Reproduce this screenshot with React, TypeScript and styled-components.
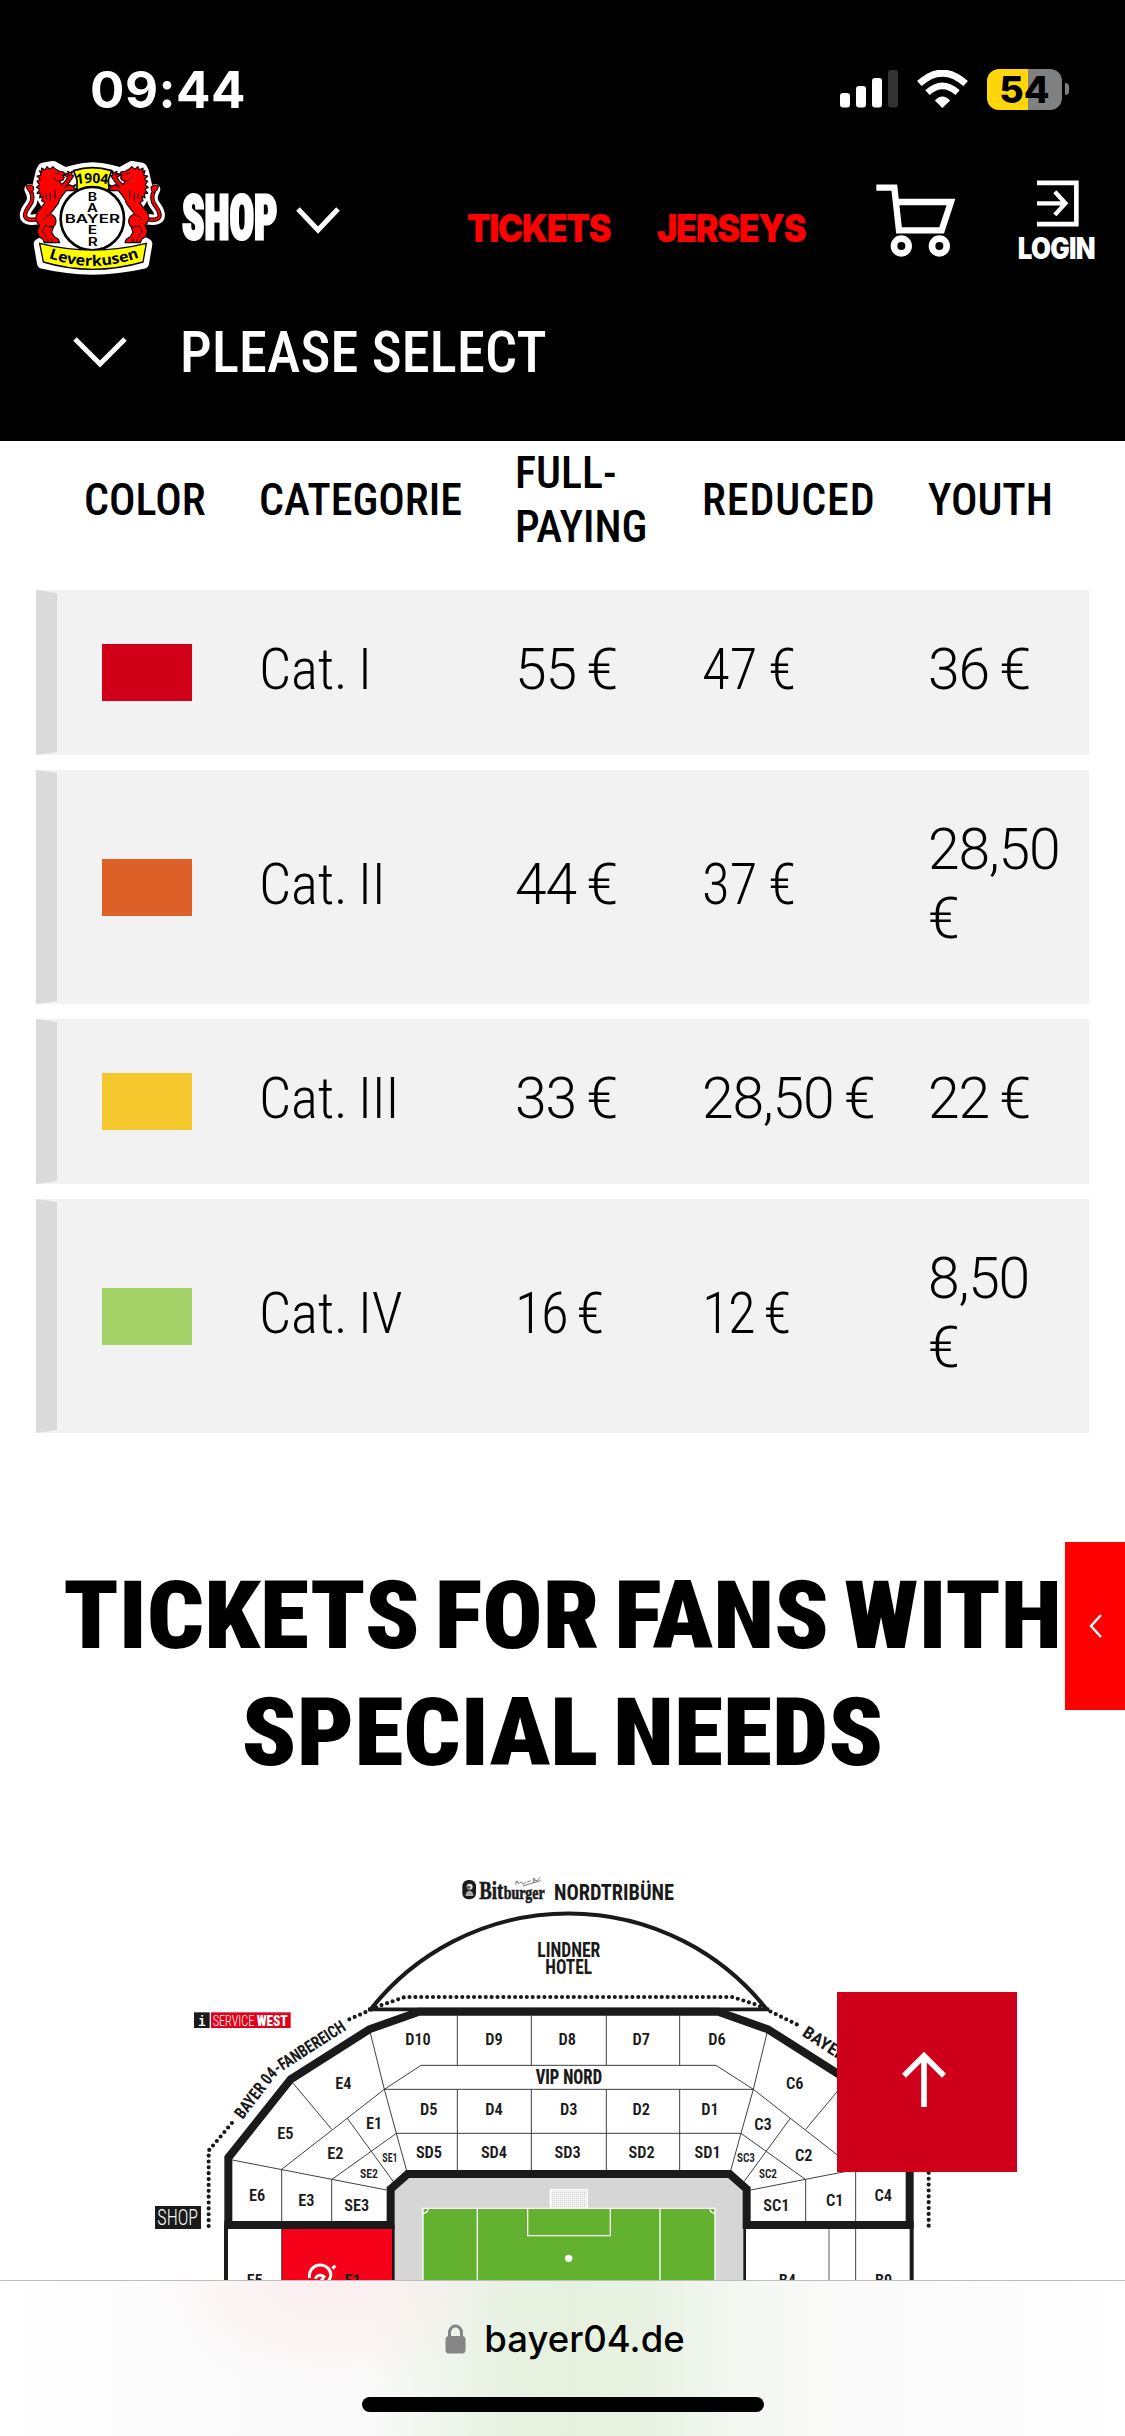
import styled, { createGlobalStyle } from 'styled-components';

const GlobalStyle = createGlobalStyle`
	* {
		box-sizing: border-box;
	}
	body {
		margin: 0;
		background: #fff;
		font-family: Roboto, sans-serif;
		color: #000;
	}
`;

const Screen = styled.div`
	position: relative;
	display: flex;
	flex-direction: column;
	width: 1125px;
	height: 2436px;
	overflow: hidden;
	background: #fff;
`;

/* ---------- top ---------- */

const TopArea = styled.header`
	height: 441px;
	flex: none;
	background: #000;
	color: #fff;
`;

const StatusBar = styled.div`
	display: flex;
	align-items: center;
	height: 154px;
	padding: 24px 56px 0 90px;
	font-family: Inter, sans-serif;
`;

const Clock = styled.span`
	flex: 1;
	font-size: 51px;
	font-weight: 700;
	letter-spacing: 0.5px;
`;

const SignalIcon = styled.svg`
	width: 58px;
	height: 38px;
	margin-right: 19px;
`;

const WifiIcon = styled.svg`
	width: 51px;
	height: 38px;
	margin-right: 19px;
`;

const Battery = styled.div`
	display: flex;
	align-items: center;
	justify-content: center;
	width: 75px;
	height: 41px;
	border-radius: 12px;
	background: linear-gradient(90deg, #ffd60a 0 41px, #808080 41px);
	color: #000;
	font-size: 37.5px;
	font-weight: 850;
	line-height: 41px;
`;

const BatteryNub = styled.div`
	width: 4px;
	height: 12px;
	margin-left: 3px;
	border-radius: 0 4px 4px 0;
	background: #808080;
`;

const Nav = styled.nav`
	display: flex;
	align-items: flex-start;
	height: 135px;
	padding: 7px 0 0 18px;
`;

const Crest = styled.svg`
	flex: none;
	width: 149px;
	height: 114px;
`;

const ShopLabel = styled.span`
	flex: none;
	width: 115px;
	margin: 22px 0 0 15px;
	font-size: 61px;
	font-weight: 900;
	font-stretch: 75%;
	line-height: 70px;
	-webkit-text-stroke: 3px #fff;
	transform: scaleX(0.67);
	transform-origin: left;
`;

const ShopChevron = styled.svg`
	flex: none;
	width: 44px;
	height: 28px;
	margin: 46px 127px 0 -1px;
`;

const NavLink = styled.span<{ $width: number }>`
	flex: none;
	width: ${(p) => p.$width}px;
	margin-top: 47px;
	color: #f00;
	font-family: Inter, sans-serif;
	font-size: 38.5px;
	font-weight: 900;
	letter-spacing: -1.5px;
	line-height: 40px;
	transform: scaleX(0.89);
	transform-origin: left;
`;

const CartIcon = styled.svg`
	flex: none;
	width: 80px;
	height: 73px;
	margin-top: 23px;
`;

const Login = styled.div`
	flex: none;
	display: flex;
	flex-direction: column;
	align-items: center;
	width: 80px;
	margin: 19px 0 0 60px;
	svg {
		width: 42px;
		height: 47px;
		margin-left: 4px;
	}
	span {
		margin-top: 6px;
		font-family: Inter, sans-serif;
		font-size: 29.6px;
		font-weight: 900;
		letter-spacing: -0.8px;
		line-height: 30px;
		transform: scaleX(0.87);
	}
`;

const Select = styled.div`
	display: flex;
	align-items: center;
	height: 126px;
	padding: 1px 0 0 72px;
	font-size: 56.5px;
	font-weight: 500;
	font-stretch: 75%;
	letter-spacing: 0.15px;
`;

const SelectChevron = styled.svg`
	width: 56px;
	height: 34px;
	margin-right: 52px;
`;

/* ---------- price table ---------- */

const columns = '223px 256px 187px 226px 1fr';

const PriceTable = styled.section`
	display: flex;
	flex-direction: column;
	gap: 15px;
	padding: 0 36px;
`;

const HeadRow = styled.div`
	display: grid;
	grid-template-columns: ${columns};
	align-items: center;
	height: 134px;
	padding-bottom: 17px;
	font-size: 44px;
	font-weight: 550;
	font-stretch: 75%;
	line-height: 54px;
	span:first-child {
		padding-left: 48px;
	}
	span:nth-child(4) {
		letter-spacing: 0.9px;
	}
`;

const PriceRow = styled.div`
	display: grid;
	grid-template-columns: ${columns};
	align-items: center;
	padding: 48px 0;
	background: #f2f2f2;
	position: relative;
	&::before {
		content: '';
		position: absolute;
		left: 0;
		top: 0;
		bottom: 0;
		width: 21px;
		background: #dadada;
		clip-path: polygon(0 0, 100% 3px, 100% calc(100% - 3px), 0 100%);
	}
`;

const Swatch = styled.div<{ $color: string }>`
	width: 90px;
	height: 57px;
	margin-left: 66px;
	background: ${(p) => p.$color};
`;

const Cell = styled.span<{ $condensed?: boolean; $spacing?: number }>`
	margin: -3px 0 3px;
	font-size: 57px;
	font-weight: 300;
	font-stretch: ${(p) => (p.$condensed ? '75%' : '100%')};
	letter-spacing: ${(p) => p.$spacing ?? 0}px;
	line-height: 69px;
	word-spacing: -2px;
	&:last-child {
		padding-right: 26px;
	}
`;

/* ---------- special needs ---------- */

const Heading = styled.h2`
	margin: 124px 0 0;
	font-size: 95px;
	font-weight: 900;
	font-stretch: 75%;
	line-height: 117px;
	text-align: center;
	white-space: nowrap;
	word-spacing: -8px;
	transform: scaleX(1.055);
`;

const StadiumMap = styled.svg`
	display: block;
	flex: none;
	width: 1125px;
	height: 420px;
	margin-top: 69px;
	font-family: Roboto, sans-serif;
	font-stretch: 75%;
	fill: #1a1a1a;
`;

const SideTab = styled.button`
	position: absolute;
	top: 1542px;
	right: 0;
	display: grid;
	place-items: center;
	width: 60px;
	height: 168px;
	padding: 0 1px 0 0;
	border: 0;
	background: #f00;
`;

const BackToTop = styled.button`
	position: absolute;
	top: 1992px;
	left: 837px;
	display: grid;
	place-items: center;
	width: 180px;
	height: 180px;
	padding: 0 6px 6px 0;
	border: 0;
	background: #cf0019;
`;

/* ---------- browser bar ---------- */

const BrowserBar = styled.footer`
	flex: none;
	display: flex;
	flex-direction: column;
	align-items: center;
	height: 156px;
	border-top: 1px solid #bdbdbd;
	background:
		radial-gradient(ellipse 190px 110px at 330px 0, rgba(255, 225, 228, 0.45), rgba(255, 255, 255, 0)),
		linear-gradient(90deg, rgba(229, 241, 222, 0) 370px, #e8f2e2 500px, #e5f1de 570px, #e8f2e2 650px, rgba(240, 245, 236, 0.5) 740px, rgba(251, 251, 251, 0) 850px),
		linear-gradient(90deg, #fff, #fafafa 240px, #fafafa 900px, #fff);
`;

const Address = styled.div`
	display: flex;
	align-items: center;
	gap: 18px;
	margin: 34px 0 0 5px;
	font-family: Inter, sans-serif;
	font-size: 36.5px;
	font-weight: 500;
	line-height: 48px;
`;

const HomeIndicator = styled.div`
	width: 402px;
	height: 15px;
	margin-top: 34px;
	border-radius: 8px;
	background: #000;
`;

const prices = [
	{ color: '#d00019', name: 'Cat. I', full: '55 €', reduced: '47 €', youth: '36 €' },
	{ color: '#de6029', name: 'Cat. II', full: '44 €', reduced: '37 €', youth: '28,50 €' },
	{ color: '#f4c82c', name: 'Cat. III', full: '33 €', reduced: '28,50 €', youth: '22 €' },
	{ color: '#a5d268', name: 'Cat. IV', full: '16 €', reduced: '12 €', youth: '8,50 €' },
];

// [label, center x, center y]
const blocks: [string, number, number][] = [
	['D10', 834, 536], ['D9', 1062, 536], ['D8', 1282, 536], ['D7', 1504, 536], ['D6', 1731, 536],
	['D5', 866, 748], ['D4', 1062, 748], ['D3', 1286, 748], ['D2', 1504, 748], ['D1', 1710, 748],
	['SD5', 867, 877], ['SD4', 1062, 877], ['SD3', 1283, 877], ['SD2', 1505, 877], ['SD1', 1703, 877],
	['E4', 610, 668], ['E5', 436, 820], ['E1', 702, 790], ['E2', 586, 880],
	['E6', 351, 1005], ['E3', 499, 1019], ['SE3', 650, 1034],
	['C6', 1964, 668], ['C3', 1869, 792], ['C2', 1991, 884],
	['SC1', 1909, 1036], ['C1', 2084, 1019], ['C4', 2230, 1005],
	['F5', 344, 1260], ['F1', 638, 1260], ['B4', 1942, 1260], ['B9', 2231, 1260],
];

const smallBlocks: [string, number, number][] = [
	['SE1', 750, 893], ['SE2', 687, 940], ['SC3', 1818, 892], ['SC2', 1884, 940],
];

const lionBody =
	'M120 92 L126 96 L126 84 L136 90 L142 80 L150 88 L160 80 L168 88 L180 94 L192 96 L196 103 L188 106 L194 112 L190 120 L180 124 ' +
	'L186 134 L198 122 L204 112 L194 106 L200 100 L208 106 L204 94 L212 98 L218 94 L216 104 L222 108 L214 120 L204 134 L196 142 ' +
	'L210 134 L218 138 L228 134 L222 144 L232 148 L220 152 L200 152 L190 164 L180 178 L176 190 L164 206 L152 222 ' +
	'C170 228 174 246 162 260 L156 276 L164 290 L176 298 L180 308 L134 308 L130 298 L118 290 L112 272 L120 256 C106 244 106 228 114 216 ' +
	'L136 188 L126 182 L130 168 L120 174 L122 160 L112 160 L120 148 L110 142 L120 134 L112 124 L122 118 L112 108 L124 106 Z';

function Lion() {
	return (
		<g>
			<path d="M112 238 C60 246 76 214 90 196 C104 178 98 162 92 150" fill="none" stroke="#000" strokeWidth="13" />
			<path d="M112 238 C60 246 76 214 90 196 C104 178 98 162 92 150" fill="none" stroke="#f00" strokeWidth="7" />
			<path d="M79 138 Q92 130 102 140 Q104 152 94 158 Q82 154 79 138 Z" fill="#f00" stroke="#000" strokeWidth="3" />
			<path d={lionBody} fill="#f00" stroke="#000" strokeWidth="3.5" strokeLinejoin="round" />
			<path
				d="M150 224 Q136 228 130 240 M162 260 Q146 262 138 256 L128 274 L140 292 M166 100 L180 102 M160 112 L172 124 L182 124 M140 160 V176 M152 158 V182 M166 150 V176 M144 296 V306 M156 296 V306"
				fill="none"
				stroke="#000"
				strokeWidth="3"
			/>
		</g>
	);
}

function ClubCrest() {
	return (
		<Crest viewBox="56 63 445 342">
			<defs>
				<path id="crestYear" d="M226 134 Q278 124 334 134" />
				<path id="crestBanner" d="M144 353 Q278 402 416 353" />
			</defs>
			{/* white outline behind everything */}
			<g fill="#fff" stroke="#fff" strokeWidth="32" strokeLinejoin="round" strokeLinecap="round">
				<path d="M124 96 L130 84 L160 79 L196 98 L228 90 Q278 76 330 90 L362 98 L396 79 L426 84 L432 96 L442 140 L432 170 L400 220 L420 300 L442 312 L432 370 Q278 406 128 370 L118 312 L138 300 L156 220 L126 170 L114 140 Z" />
				<path d="M112 238 C60 246 76 214 90 196 C104 178 98 162 90 148" fill="none" />
				<path d="M444 238 C496 246 480 214 466 196 C452 178 458 162 466 148" fill="none" />
			</g>
			<path d="M222 92 Q278 74 336 92 L326 120 L328 150 L232 150 L232 120 Z" fill="#ff0" stroke="#000" strokeWidth="5" />
			<Lion />
			<g transform="translate(556 0) scale(-1 1)">
				<Lion />
			</g>
			<circle cx="278" cy="236" r="95" fill="#fff" stroke="#000" strokeWidth="8" />
			<g fontFamily="Inter" fontWeight="600" fontSize="36" textAnchor="middle">
				<text x="278" y="183" textLength="28" lengthAdjust="spacingAndGlyphs">B</text>
				<text x="278" y="216" textLength="32" lengthAdjust="spacingAndGlyphs">A</text>
				<text x="278" y="249" fontSize="37" textLength="166" lengthAdjust="spacingAndGlyphs">BAYER</text>
				<text x="278" y="283" textLength="28" lengthAdjust="spacingAndGlyphs">E</text>
				<text x="279" y="317" textLength="30" lengthAdjust="spacingAndGlyphs">R</text>
			</g>
			<text fontFamily="Open Sans" fontWeight="700" fontSize="42">
				<textPath href="#crestYear" startOffset="5" textLength="94" lengthAdjust="spacingAndGlyphs">1904</textPath>
			</text>
			<path d="M120 310 Q278 350 440 310 L430 366 Q278 410 131 366 Z" fill="#ff0" stroke="#000" strokeWidth="4" />
			<text fontFamily="Open Sans" fontWeight="700" fontSize="44">
				<textPath href="#crestBanner" startOffset="3" textLength="278" lengthAdjust="spacingAndGlyphs">Leverkusen</textPath>
			</text>
		</Crest>
	);
}

function Stadium() {
	return (
		<StadiumMap viewBox="-420 0 3375 1260">
			<defs>
				<path id="fanWest" d="M308 780 L394 666 Q410 644 432 630 L634 500" />
				<path id="fanEast" d="M1984 526 L2140 628 L2260 780" />
				<pattern id="net" width="6" height="6" patternUnits="userSpaceOnUse">
					<rect width="6" height="6" fill="#fff" />
					<rect width="4" height="4" fill="#d0d0d0" />
				</pattern>
			</defs>

			{/* field */}
			<path d="M756 1260 V985 L803 942 H1769 L1816 985 V1260 Z" fill="#d6d6d6" />
			<rect x="1231" y="989" width="111" height="56" fill="url(#net)" stroke="#fff" strokeWidth="4" />
			<rect x="849" y="1045" width="876" height="260" fill="#62b22f" />
			<g fill="none" stroke="#fff" strokeWidth="4">
				<path d="M849 1270 V1045 H1725 V1270 M1012 1045 V1260 M1560 1045 V1260" />
				<path d="M1163 1045 V1127 H1411 V1045 M849 1060 Q864 1060 864 1045 M1710 1045 Q1710 1060 1725 1060" />
			</g>
			<circle cx="1286" cy="1195" r="11" fill="#fff" />

			{/* seats for hard of hearing */}
			<rect x="426" y="1100" width="330" height="160" fill="#f50018" />
			<g fill="none" stroke="#fff" strokeWidth="9">
				<path d="M509 1254 A32 32 0 0 1 572 1240 Q574 1250 566 1262" />
				<path d="M526 1256 A16 16 0 0 1 552 1250 L544 1262" />
				<path d="M577 1226 L586 1217" />
			</g>

			{/* block borders */}
			<g fill="none" stroke="#222" strokeWidth="2.6">
				<path d="M690 515 L733 688 L769 820 L800 932 M1882 515 L1840 688 L1803 820 L1772 932" />
				<path d="M425 928 L733 688 L843 616 H1728 L1840 688 L2147 928" />
				<path d="M733 688 H1840 M769 820 H1803" />
				<path d="M952 466 V616 M1174 466 V616 M1399 466 V616 M1619 466 V616" />
				<path d="M952 688 V930 M1174 688 V930 M1399 688 V930 M1619 688 V930" />
				<path d="M458 668 L575 808 M622 775 L760 965 M769 820 L576 958 M277 900 L740 990" />
				<path d="M2114 668 L1997 808 M1951 775 L1812 965 M1803 820 L1996 958 M2295 900 L1832 990" />
				<path d="M425 928 V1260 M575 958 V1083 M2147 928 V1260 M1997 958 V1083" />
			</g>
			<path d="M2067 1107 V1260" stroke="#888" strokeWidth="4" />

			{/* walls */}
			<g fill="none" stroke="#1a1a1a">
				<path d="M692 448 A757 757 0 0 1 1880 448" strokeWidth="12" />
				<path d="M684 448 H1888" strokeWidth="11" />
				<path d="M265 1095 V893 L452 658 L688 508 L837 455 H1735 L1884 508 L2120 658 L2309 893 V1095" strokeWidth="24" />
				<path d="M253 1095 H752 V987 L803 942 H1769 L1820 987 V1095 H2321" strokeWidth="24" />
				<path d="M258 1095 V1260 M2315 1095 V1260" strokeWidth="12" />
				<path d="M760 1095 V1260 M1814 1095 V1260" strokeWidth="8" />
				<g strokeWidth="12.5" strokeLinecap="round" strokeDasharray="0 17.6">
					<path d="M206 1098 V872 L280 784" />
					<path d="M628 478 L722 436 L795 411 H1777 L1852 435 L1980 498" />
					<path d="M2366 1097 V900" />
				</g>
			</g>

			<g fontSize="49" fontWeight="600" textAnchor="middle">
				{blocks.map(([name, x, y]) => (
					<text key={name} x={x} y={y + 17.5}>{name}</text>
				))}
			</g>
			<g fontSize="39" fontWeight="600" textAnchor="middle">
				{smallBlocks.map(([name, x, y]) => (
					<text key={name} x={x} y={y + 14} textLength={name === 'SE1' ? 46 : 54} lengthAdjust="spacingAndGlyphs">{name}</text>
				))}
			</g>

			<g fontWeight="700">
				<text x="1187" y="673" fontSize="58" fontWeight="800" textLength="199" lengthAdjust="spacingAndGlyphs">VIP NORD</text>
				<text x="1192" y="290" fontSize="60" textLength="189" lengthAdjust="spacingAndGlyphs">LINDNER</text>
				<text x="1216" y="343" fontSize="60" textLength="140" lengthAdjust="spacingAndGlyphs">HOTEL</text>
				<text x="1242" y="120" fontSize="67" textLength="360" lengthAdjust="spacingAndGlyphs">NORDTRIBÜNE</text>
				<text fontSize="51">
					<textPath href="#fanWest" textLength="420" lengthAdjust="spacingAndGlyphs">BAYER 04-FANBEREICH</textPath>
				</text>
				<text fontSize="51">
					<textPath href="#fanEast" textLength="318" lengthAdjust="spacingAndGlyphs">BAYER 04-FAN</textPath>
				</text>
			</g>

			{/* sponsor */}
			<rect x="967" y="60" width="41" height="58" rx="18" />
			<circle cx="989" cy="80" r="9" fill="#ddd" />
			<path d="M976 108 Q978 92 990 92 Q1000 94 1000 108 Z" fill="#aaa" />
			<circle cx="986" cy="82" r="5" fill="#555" />
			<g fontFamily="Liberation Serif" fontWeight="700" stroke="#1a1a1a" strokeWidth="2">
				<text x="1018" y="118" fontSize="78" textLength="72" lengthAdjust="spacingAndGlyphs">Bit</text>
				<text x="1091" y="116" fontSize="58" textLength="123" lengthAdjust="spacingAndGlyphs">burger</text>
			</g>
			<path d="M1128 74 V64 Q1134 62 1132 68 Q1138 74 1142 66 L1150 72 L1158 66 M1162 66 L1172 62 M1180 68 V56 Q1188 54 1184 62 L1192 62 L1200 52 M1148 78 L1202 62" fill="none" stroke="#333" strokeWidth="2" />

			{/* service + shop tags */}
			<rect x="162" y="457" width="47" height="47" />
			<rect x="213" y="457" width="239" height="47" fill="#e2001a" />
			<g fill="#fff">
				<text x="175" y="497" fontSize="46" fontFamily="Liberation Mono" fontWeight="700" textLength="22" lengthAdjust="spacingAndGlyphs">i</text>
				<text x="218" y="497" fontSize="46" fontWeight="300" textLength="125" lengthAdjust="spacingAndGlyphs">SERVICE</text>
				<text x="350" y="497" fontSize="46" fontWeight="900" textLength="93" lengthAdjust="spacingAndGlyphs">WEST</text>
			</g>
			<rect x="45" y="1038" width="138" height="69" />
			<text x="52" y="1096" fontSize="64" fontWeight="300" fill="#fff" textLength="122" lengthAdjust="spacingAndGlyphs">SHOP</text>
		</StadiumMap>
	);
}

// prices with a 1 or a 7 run narrower than the others
function Price({ value }: { value: string }) {
	if (value.startsWith('1')) return <Cell $condensed $spacing={-1.6}>{value}</Cell>;
	if (value.includes('7')) return <Cell $condensed>{value}</Cell>;
	return <Cell $spacing={-1.2}>{value}</Cell>;
}

export default function App() {
	return (
		<Screen>
			<GlobalStyle />
			<TopArea>
				<StatusBar>
					<Clock>09:44</Clock>
					<SignalIcon viewBox="0 0 58 38" fill="#fff">
						<rect x="0" y="23" width="10" height="14.5" rx="3" />
						<rect x="16" y="16" width="10" height="21.5" rx="3" />
						<rect x="32" y="8" width="10" height="29.5" rx="3" />
						<rect x="48" y="0" width="10" height="37.5" rx="3" fill="#333" />
					</SignalIcon>
					<WifiIcon viewBox="412 90 151 112" fill="none" stroke="#fff">
						<path d="M419 130 Q487 68 556 130" strokeWidth="20" />
						<path d="M443 157 Q487 117 532 157" strokeWidth="19" />
						<path d="M465 180 Q487 156 510 180 L487 202 Z" fill="#fff" stroke="none" />
					</WifiIcon>
					<Battery>54</Battery>
					<BatteryNub />
				</StatusBar>
				<Nav>
					<ClubCrest />
					<ShopLabel>SHOP</ShopLabel>
					<ShopChevron viewBox="0 0 44 28">
						<path d="M2 2 L22 23 L42 2" fill="none" stroke="#fff" strokeWidth="5" />
					</ShopChevron>
					<NavLink $width={190}>TICKETS</NavLink>
					<NavLink $width={219}>JERSEYS</NavLink>
					<CartIcon viewBox="290 432 240 219" fill="none" stroke="#fff">
						<path d="M291 443 H345 L359 571 H487 L515 486 H350" strokeWidth="19" />
						<circle cx="366" cy="618" r="22" strokeWidth="20" />
						<circle cx="480" cy="618" r="22" strokeWidth="20" />
					</CartIcon>
					<Login>
						<svg viewBox="773 419 127 141" fill="none" stroke="#fff">
							<path d="M773 427 H892 V552 H773" strokeWidth="14" />
							<path d="M773 489 H858 M827 454 L859 489 L827 524" strokeWidth="13" />
						</svg>
						<span>LOGIN</span>
					</Login>
				</Nav>
				<Select>
					<SelectChevron viewBox="0 0 56 34">
						<path d="M3 3 L28 28 L53 3" fill="none" stroke="#fff" strokeWidth="5" />
					</SelectChevron>
					PLEASE SELECT
				</Select>
			</TopArea>

			<PriceTable>
				<HeadRow>
					<span>COLOR</span>
					<span>CATEGORIE</span>
					<span>FULL-PAYING</span>
					<span>REDUCED</span>
					<span>YOUTH</span>
				</HeadRow>
				{prices.map((p) => (
					<PriceRow key={p.name}>
						<Swatch $color={p.color} />
						<Cell $condensed $spacing={-0.2}>{p.name}</Cell>
						<Price value={p.full} />
						<Price value={p.reduced} />
						<Price value={p.youth} />
					</PriceRow>
				))}
			</PriceTable>

			<Heading>
				TICKETS FOR FANS WITH
				<br />
				SPECIAL NEEDS
			</Heading>
			<Stadium />

			<SideTab>
				<svg width="16" height="26" viewBox="0 0 16 26">
					<path d="M14 2 L4 13 L14 24" fill="none" stroke="#fff" strokeWidth="2.4" />
				</svg>
			</SideTab>
			<BackToTop>
				<svg width="44" height="56" viewBox="0 0 132 168" fill="none" stroke="#fff" strokeWidth="17">
					<path d="M66 10 V168 M6 74 L66 14 L126 74" />
				</svg>
			</BackToTop>

			<BrowserBar>
				<Address>
					<svg width="21" height="30" viewBox="0 0 21 30">
						<path d="M4.5 14 V8.5 A6 6.5 0 0 1 16.5 8.5 V14" fill="none" stroke="#858585" strokeWidth="3" />
						<rect x="0.5" y="12" width="20" height="17.5" rx="3.5" fill="#858585" />
					</svg>
					bayer04.de
				</Address>
				<HomeIndicator />
			</BrowserBar>
		</Screen>
	);
}
